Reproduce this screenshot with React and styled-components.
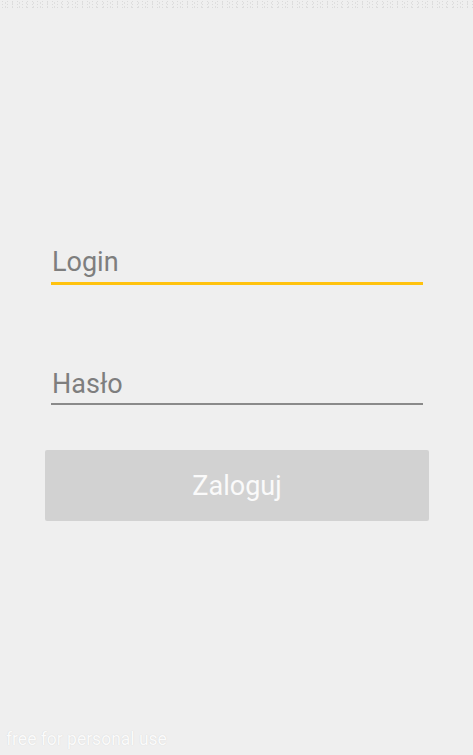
import React from "react";
import styled, { createGlobalStyle } from "styled-components";

const Global = createGlobalStyle`
  html, body { margin: 0; padding: 0; background: #efefef; }
  body { font-family: Roboto, "Noto Sans", sans-serif; }
  #root { min-height: 755px; }
`;

const Screen = styled.div`
  position: relative;
  width: 473px;
  height: 755px;
  background: #efefef;
  overflow: hidden;
  display: flex;
  flex-direction: column;
`;

const Noise = styled.div`
  height: 10px;
  background-image: radial-gradient(circle, #d6d6d6 0.6px, transparent 0.9px),
    radial-gradient(circle, #dcdcdc 0.6px, transparent 0.9px);
  background-size: 5px 3px, 7px 4px;
  background-position: 0 0, 2px 1px;
  opacity: 0.8;
`;

const Form = styled.div`
  display: flex;
  flex-direction: column;
  padding: 236px 44px 0 45px;
`;

const Field = styled.div`
  margin: ${(p) => p.$mt}px 6px 0 6px;
  padding: 0 0 ${(p) => p.$pb}px 1px;
  font-size: 27px;
  line-height: 32px;
  color: #7e7e7e;
  border-bottom: ${(p) => (p.$focused ? "3px solid #ffc20e" : "2px solid #8a8a8a")};
`;

const Button = styled.button`
  margin-top: 45px;
  height: 71px;
  border: none;
  border-radius: 2px;
  background: #d2d2d2;
  color: #fafafa;
  font-family: Roboto, "Noto Sans", sans-serif;
  font-size: 27px;
  padding: 0;
`;

const Watermark = styled.div`
  position: absolute;
  left: 6px;
  bottom: 6px;
  font-family: Roboto, sans-serif;
  font-size: 17.5px;
  color: #fbfbfb;
  text-shadow: 0 0 1px #cfcfcf;
`;

export default function App() {
  return (
    <>
      <Global />
      <Screen>
        <Noise />
        <Form>
          <Field $mt={0} $pb={4} $focused>Login</Field>
          <Field $mt={83} $pb={3}>Hasło</Field>
          <Button>Zaloguj</Button>
        </Form>
        <Watermark>free for personal use</Watermark>
      </Screen>
    </>
  );
}
